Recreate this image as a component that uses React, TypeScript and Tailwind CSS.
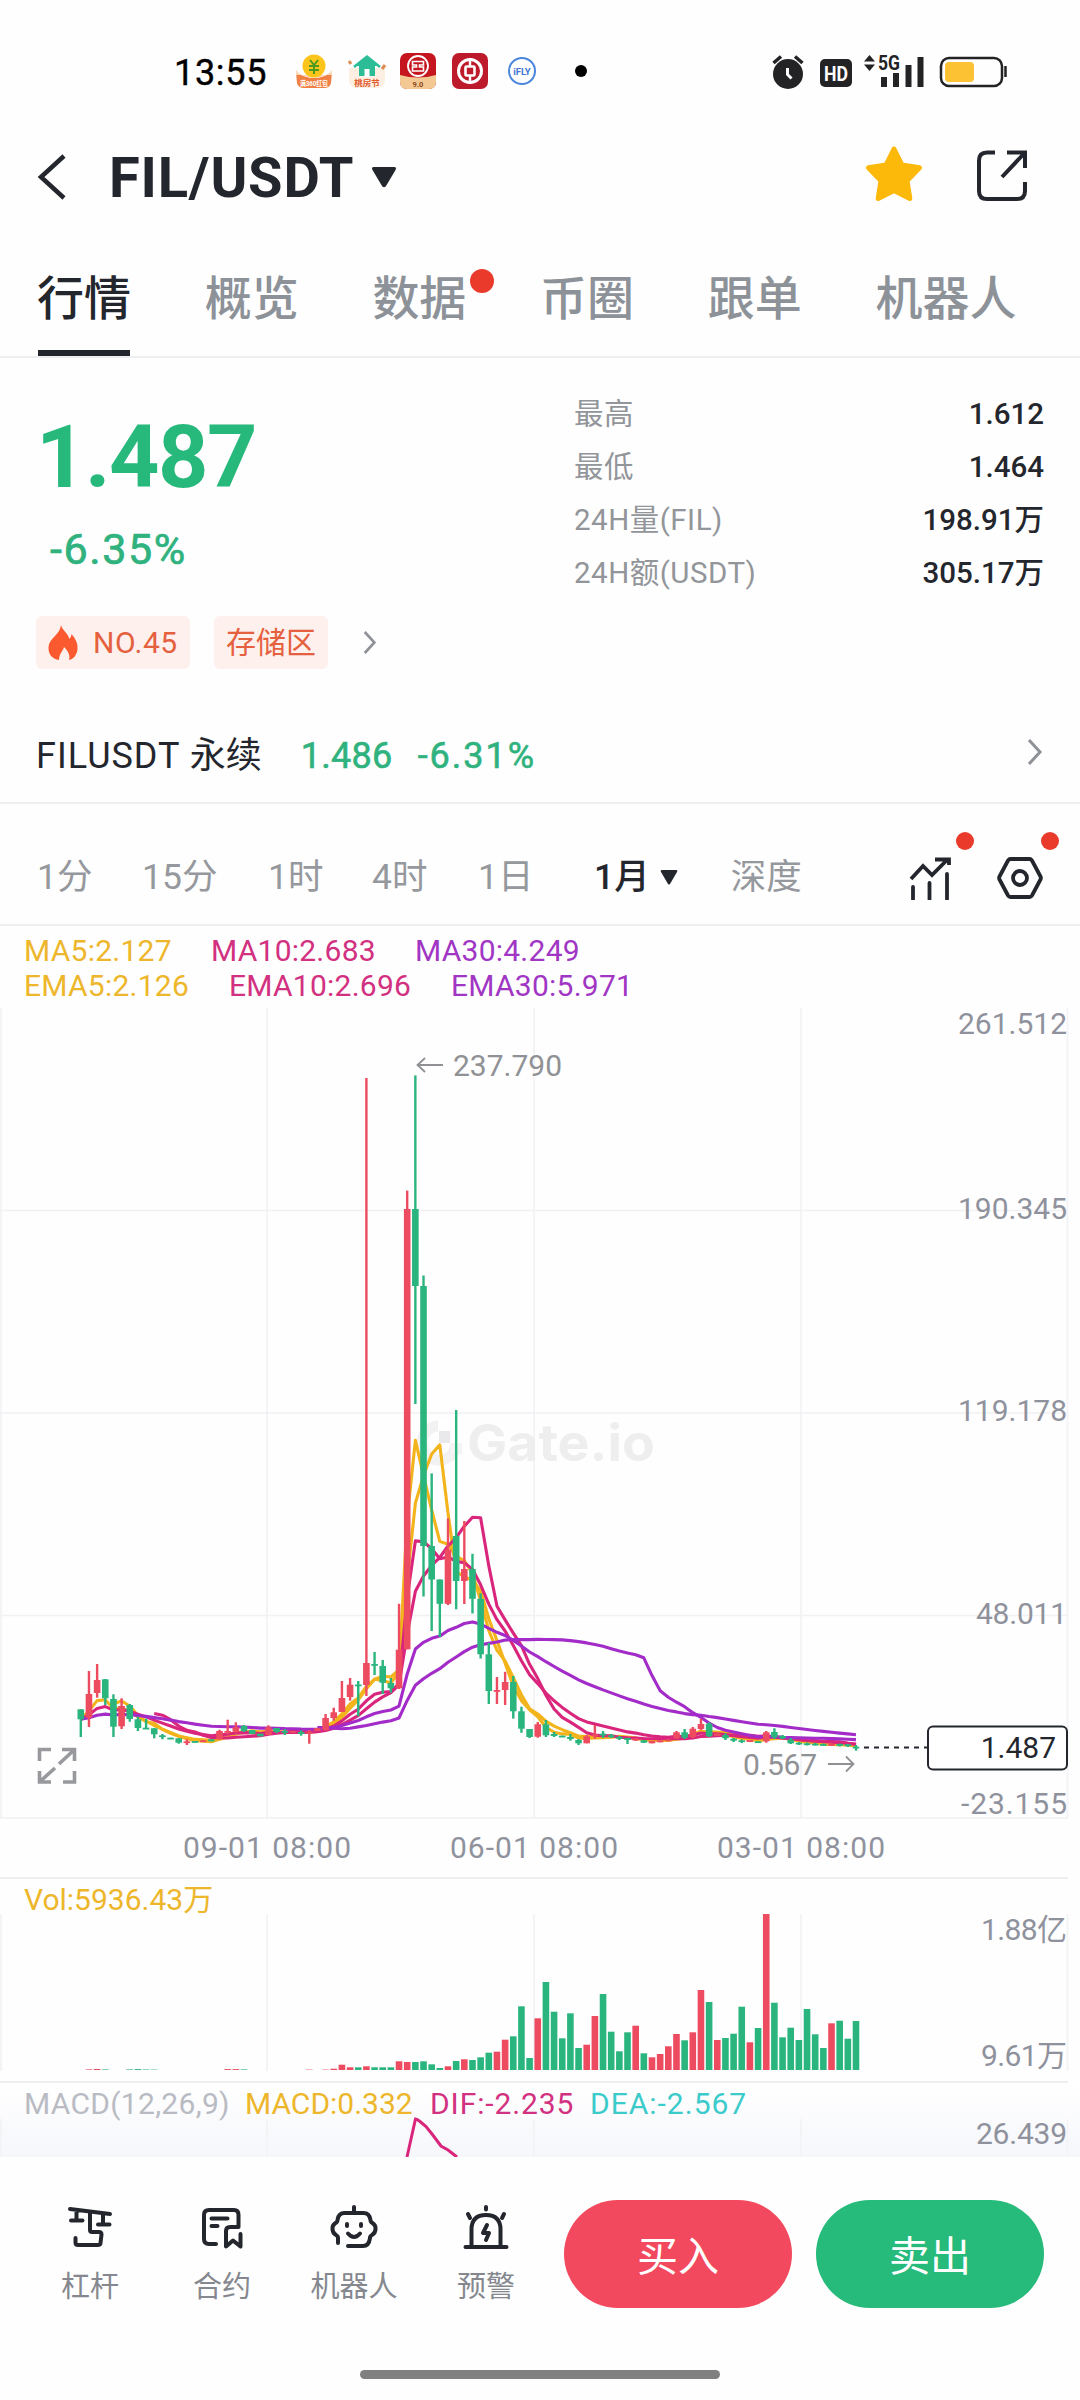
import React from "react";
import { clsx } from "clsx";

const UP = "#ed4b60";
const DOWN = "#2bb57e";

// [body top, body bottom, wick top, wick bottom, rising]
type Candle = [number, number, number, number, 0 | 1];

const CANDLES: Candle[] = [
  [1709.3, 1719.3, 1709.3, 1737, 0],
  [1694, 1717.7, 1671, 1727, 1],
  [1680, 1693, 1664, 1697.7, 1],
  [1679.3, 1698.3, 1679, 1705, 0],
  [1699, 1726.7, 1694.3, 1737, 0],
  [1706, 1726.3, 1698.3, 1729, 1],
  [1705, 1719, 1704, 1721.7, 0],
  [1719.3, 1728, 1716.7, 1731, 0],
  [1727.7, 1729, 1718.7, 1729, 0],
  [1728.3, 1734.3, 1728, 1738.3, 0],
  [1735.3, 1736.7, 1734, 1739.3, 0],
  [1737.7, 1739, 1737.7, 1739, 0],
  [1738.3, 1742.7, 1738.3, 1743.7, 0],
  [1741.3, 1742.3, 1739.3, 1745, 1],
  [1741, 1742.7, 1741, 1742.7, 0],
  [1740.3, 1741.7, 1740.3, 1741.7, 1],
  [1739.3, 1741.3, 1739.3, 1741.3, 0],
  [1731, 1739.3, 1729.7, 1739.3, 1],
  [1731, 1732.7, 1719.7, 1734, 1],
  [1727.3, 1731.7, 1722.3, 1732.7, 1],
  [1726, 1731, 1725, 1732, 0],
  [1730, 1734, 1730, 1734, 0],
  [1733.7, 1736.3, 1733.7, 1736.3, 0],
  [1727.3, 1735, 1725.3, 1735, 1],
  [1728, 1732, 1728, 1733, 0],
  [1731, 1732.7, 1729, 1735, 0],
  [1731, 1732.3, 1731, 1732.3, 1],
  [1732, 1734, 1730.3, 1735.7, 0],
  [1731.7, 1733, 1730, 1743.7, 1],
  [1728, 1731, 1728, 1731, 1],
  [1718, 1730.3, 1714, 1730.3, 1],
  [1712.3, 1718, 1707.7, 1720.7, 1],
  [1698, 1712, 1681, 1712, 1],
  [1684.7, 1697, 1678, 1700.7, 1],
  [1684.5, 1686, 1681, 1716.3, 0],
  [1663, 1685, 1078, 1696, 1],
  [1664, 1665, 1652, 1675, 0],
  [1666, 1682.7, 1660, 1694, 0],
  [1683, 1688.3, 1678, 1692.7, 0],
  [1649.7, 1688.3, 1603.8, 1689, 1],
  [1209, 1649.3, 1190.6, 1649.3, 1],
  [1209, 1286, 1075.4, 1404, 0],
  [1286, 1546, 1275.5, 1596.5, 0],
  [1546, 1579.5, 1473.4, 1631, 0],
  [1579.5, 1603.8, 1579.5, 1637, 0],
  [1549.6, 1603.8, 1518.4, 1605, 1],
  [1536, 1581, 1410, 1609.3, 0],
  [1569, 1581, 1521, 1604, 1],
  [1569, 1598.8, 1553.8, 1613.5, 0],
  [1598.8, 1654.3, 1593.3, 1658.5, 0],
  [1654.3, 1691, 1643, 1704, 0],
  [1690, 1691, 1677, 1704, 1],
  [1682, 1690, 1671.8, 1705, 1],
  [1682, 1711.3, 1676, 1718.6, 0],
  [1711.3, 1728.7, 1706.7, 1732.8, 0],
  [1729, 1737, 1729, 1738, 0],
  [1724.3, 1736.7, 1722, 1737.7, 1],
  [1724.3, 1735.3, 1720, 1737, 0],
  [1734, 1736, 1732, 1737, 0],
  [1735.7, 1737, 1735.7, 1737, 0],
  [1737, 1739, 1734, 1740.7, 0],
  [1740, 1743.3, 1739, 1745, 0],
  [1736.3, 1743.3, 1735, 1743.3, 1],
  [1734.3, 1736.3, 1725, 1738.7, 1],
  [1733.7, 1735.3, 1731, 1738, 0],
  [1735.3, 1737, 1734, 1738, 0],
  [1737, 1738.7, 1736, 1740, 0],
  [1738, 1740, 1738, 1744, 0],
  [1738.7, 1740.3, 1738, 1741, 1],
  [1740.3, 1742.7, 1740, 1743, 0],
  [1741, 1743.3, 1741, 1743.3, 1],
  [1740.3, 1742.3, 1740.3, 1742.3, 1],
  [1739.3, 1741.3, 1739.3, 1741.3, 1],
  [1732.3, 1738.3, 1731, 1739, 1],
  [1732.3, 1737.7, 1729, 1739, 0],
  [1728.7, 1737, 1727, 1738, 1],
  [1724, 1729, 1718.7, 1730, 1],
  [1723.7, 1736.3, 1722.3, 1737, 0],
  [1733.7, 1736, 1733, 1736, 1],
  [1735, 1738.3, 1733.3, 1740, 0],
  [1738.7, 1740.7, 1738, 1742, 0],
  [1740.3, 1742, 1739.5, 1743, 0],
  [1740, 1742, 1740, 1742, 1],
  [1741.3, 1742.3, 1741.3, 1742.3, 0],
  [1732.3, 1741.3, 1731, 1742.7, 1],
  [1732, 1737.3, 1728.3, 1739, 0],
  [1736, 1738.3, 1735, 1739, 0],
  [1739.7, 1743.3, 1738, 1744, 0],
  [1742.7, 1744, 1742, 1745, 0],
  [1743.3, 1744.3, 1742.5, 1745.5, 0],
  [1743.7, 1744.7, 1743, 1745.5, 0],
  [1744, 1745, 1743.5, 1746, 0],
  [1744, 1745.3, 1743.5, 1746, 1],
  [1744, 1745.3, 1743.5, 1746.5, 0],
  [1744.3, 1745.7, 1744, 1747, 0],
  [1746.7, 1748, 1745, 1750.7, 0],
];

// bar heights in px, one for each candle
const VOLUMES = [
  0, 0.6, 1, 0.6, 0, 0, 0.6, 0.9, 0.5, 0.4, 0, 0, 0, 0, 0, 0, 0, 0, 0.9, 0.9, 0.6, 0, 0, 0,
  0, 0, 0, 0, 0.4, 0, 0.4, 1.3, 5.3, 2.7, 2.7, 3.7, 2.7, 2.7, 2.7, 8.7, 8, 8, 8.7, 5.7,
  2, 3.7, 9, 10.7, 10, 12.7, 17.3, 18.3, 30.3, 33.7, 63.7, 12, 51.7, 88, 58.3, 31.7, 56.7,
  22, 25.3, 54, 76, 38.3, 18.7, 37.7, 44.3, 16.7, 12.7, 16, 23.7, 36, 29.7, 37.7, 80, 68,
  30, 32, 36.3, 63.3, 27.7, 42, 156, 67.3, 32.7, 42.3, 30, 61, 35.7, 22, 46.7, 49.3, 31.3, 49,
];

const xAt = (i: number) => 80.8 + i * 8.16;
const CLOSES = CANDLES.map(([top, bottom, , , up]) => (up ? top : bottom));

const sma = (n: number) =>
  CLOSES.map((_, i) =>
    i < n - 1 ? null : CLOSES.slice(i - n + 1, i + 1).reduce((a, b) => a + b, 0) / n
  );

const ema = (n: number) => {
  let prev = CLOSES[0];
  return CLOSES.map((c) => (prev += ((c - prev) * 2) / (n + 1)));
};

const toPoints = (values: (number | null)[]) =>
  values
    .map((v, i) => (v === null ? null : `${xAt(i).toFixed(1)},${v.toFixed(1)}`))
    .filter(Boolean)
    .join(" ");

const LINES = [
  { color: "#f3b41b", values: sma(5) },
  { color: "#f3b41b", values: ema(5) },
  { color: "#d9267c", values: sma(10) },
  { color: "#d9267c", values: ema(10) },
  { color: "#a32cc9", values: sma(30) },
  { color: "#a32cc9", values: ema(30) },
];

const TABS = ["行情", "概览", "数据", "币圈", "跟单", "机器人"];

const STATS = [
  ["最高", "1.612"],
  ["最低", "1.464"],
  ["24H量(FIL)", "198.91万"],
  ["24H额(USDT)", "305.17万"],
];

const Chevron = ({ className }: { className?: string }) => (
  <svg viewBox="0 0 16 28" className={className} fill="none" stroke="#8e9196" strokeWidth="3">
    <path d="M2 2l11 12L2 26" />
  </svg>
);

const StatusBar = () => (
  <div className="flex h-[146px] items-center pl-[174px] pr-[70px]">
    <span className="w-[122px] text-[36px] leading-none tracking-[0.700px] text-black [-webkit-text-stroke:0.400px_#000]">
      13:55
    </span>
    <svg width="300" height="40" viewBox="0 0 300 40" className="-mt-0.5">
      {/* coin */}
      <path d="M0 20q18 12 36 0l-1 11q-1 5-7 5H8q-6 0-7-5z" fill="#f08043" />
      <path d="M0 18q5 6 12 7h12q7-1 12-7v5H0z" fill="#fbd9bb" />
      <circle cx="18" cy="14" r="11.5" fill="#fdc51b" />
      <path d="M14 8l4 5 4-5M13 14h10M13 18h10M18 13v9" stroke="#4b9a1f" strokeWidth="2" fill="none" />
      <text x="18" y="34" textAnchor="middle" fontSize="7" fontWeight="700" fill="#fff" textLength="28" lengthAdjust="spacingAndGlyphs">满360红包</text>
      {/* house */}
      <path d="M53 16v13q1 7 8 7h20q7 0 8-7V16z" fill="#fdf0e2" />
      <path d="M71 5l11 9h-3v10H63V14h-3z" fill="#2cbd97" />
      <path d="M58 15L71 4.500l13 10.500" stroke="#2cbd97" strokeWidth="2.500" fill="none" />
      <rect x="68.500" y="17" width="5" height="8" fill="#fff" />
      <path d="M53 9l2 3M86 17l3-4" stroke="#e08c53" strokeWidth="3" />
      <text x="71" y="34" textAnchor="middle" fontSize="8.500" fontWeight="700" fill="#e2592c">桃房节</text>
      {/* icbc */}
      <rect x="104" y="1" width="36" height="36" rx="7" fill="#c5161f" />
      <path d="M104 23q18 5 36 0v7q0 7-7 7h-22q-7 0-7-7z" fill="#f3c893" />
      <circle cx="122" cy="14" r="10" fill="#c5161f" stroke="#fff" strokeWidth="1.800" />
      <path d="M116.500 9.500h11v3.500h-4v2h4v4h-11v-4h4v-2h-4z" fill="none" stroke="#fff" strokeWidth="1.600" />
      <text x="122" y="35" textAnchor="middle" fontSize="7.500" fontWeight="700" fill="#8d4a23">9.0</text>
      {/* bank of china */}
      <rect x="156" y="1" width="36" height="36" rx="7" fill="#bd1a2b" />
      <circle cx="174" cy="19" r="11.500" fill="none" stroke="#fff" strokeWidth="3" />
      <rect x="169.500" y="14.500" width="9" height="9" rx="1" fill="none" stroke="#fff" strokeWidth="2.600" />
      <path d="M174 6v8M174 24v8" stroke="#fff" strokeWidth="2.400" />
      {/* ifly */}
      <circle cx="226" cy="19" r="13" fill="none" stroke="#4a86dc" strokeWidth="2" />
      <text x="226" y="22.500" textAnchor="middle" fontSize="9.500" fontWeight="700" fill="#3f78d0">iFLY</text>
      <circle cx="285" cy="19" r="6" fill="#000" />
    </svg>

    <svg width="240" height="40" viewBox="770 52 240 40" className="ml-auto -mt-0.5 text-[#232325]">
      <circle cx="788" cy="74" r="15" fill="currentColor" />
      <path d="M773.500 63l7.500-6.500M802.500 63l-7.500-6.500" stroke="currentColor" strokeWidth="3.500" />
      <path d="M787.500 68v6.500l4 4" stroke="#fff" strokeWidth="3" fill="none" />
      <rect x="820" y="59" width="32" height="28" rx="5" fill="currentColor" />
      <text x="836" y="80.500" textAnchor="middle" fontSize="21" fontWeight="700" fill="#fff" textLength="24" lengthAdjust="spacingAndGlyphs">HD</text>
      <path d="M864 61.500l5.500-6.500 5.500 6.500zM864 64.500h11l-5.500 6.500z" fill="currentColor" />
      <path d="M881 77h6v10h-6zM893 73h6v14h-6zM905.500 65h6v22h-6zM917.500 57h6v30h-6z" fill="currentColor" />
      <text x="878" y="70" fontSize="21" fontWeight="700" fill="currentColor" textLength="22" lengthAdjust="spacingAndGlyphs">5G</text>
      <rect x="941" y="58" width="61" height="28" rx="8" fill="none" stroke="currentColor" strokeWidth="2.500" />
      <rect x="945" y="62" width="29" height="20" rx="4" fill="#fdc233" />
      <path d="M1005.500 66v11" stroke="currentColor" strokeWidth="2.500" />
    </svg>
  </div>
);

const Header = () => (
  <header className="flex h-[62px] items-center pl-[37px] pr-[51px] text-[#24262d]">
    <svg width="30" height="46" viewBox="0 0 30 46" fill="none" stroke="currentColor" strokeWidth="4.500">
      <path d="M27 2L4 23l23 21" />
    </svg>
    <h1 className="ml-[42px] mt-0.5 text-[56px] font-bold leading-none tracking-[0.800px]">FIL/USDT</h1>
    <svg width="26" height="22" viewBox="0 0 26 22" className="ml-[17px]">
      <path d="M3 1h20q3 0 1.500 3L15 20q-2 2.500-4 0L1.500 4Q0 1 3 1z" fill="currentColor" />
    </svg>
    <svg width="60" height="58" viewBox="0 0 60 58" className="-mt-1 ml-auto">
      <path
        d="M30 3l8 16 17.500 2.700-12.500 13 2.800 17.800L30 44.500 14.200 52.500 17 34.700l-12.500-13L22 19z"
        fill="#fdb909"
        stroke="#fdb909"
        strokeWidth="5"
        strokeLinejoin="round"
      />
    </svg>
    <svg width="54" height="54" viewBox="0 0 54 54" fill="none" stroke="currentColor" strokeWidth="4" className="-mt-0.5 ml-[51px]">
      <path d="M20 3.500h-8q-8 0-8 8V42q0 8 8 8h30q8 0 8-8V33" />
      <path d="M32 3.500h18V19M50 3.500L27 28" />
    </svg>
  </header>
);

const Tabs = () => (
  <nav className="flex h-[150px] items-end gap-[73.700px] border-b-2 border-[#eeeff1] pl-[37px]">
    {TABS.map((tab, i) => (
      <div key={tab} className="relative flex flex-col items-center">
        <span
          className={clsx(
            "text-[47px] font-medium leading-[70px]",
            i === 0 ? "text-[#24262d]" : "text-[#8d9299]"
          )}
        >
          {tab}
        </span>
        <span className={clsx("mt-4 h-1.5 w-[92px]", i === 0 && "bg-[#24262d]")} />
        {tab === "数据" && (
          <span className="absolute -right-[28px] top-[5px] size-6 rounded-full bg-[#e93a2c]" />
        )}
      </div>
    ))}
  </nav>
);

const Summary = () => (
  <section className="flex h-[311px] justify-between pl-9 pr-9">
    <div className="flex flex-col pt-[49px]">
      <span className="text-[88px] font-bold leading-[100px] tracking-[-1.500px] text-[#27b87c]">
        1.487
      </span>
      <span className="mt-3 pl-3.5 text-[43px] leading-[60px] tracking-[1.600px] text-[#2fb27e] [-webkit-text-stroke:0.700px_#2fb27e]">
        -6.35%
      </span>
      <div className="mt-[37px] flex h-[53px] items-center text-[30px] text-[#e5603e]">
        <div className="flex h-full w-[154px] items-center rounded-md bg-[#fef0ec] pl-3">
          <svg width="30" height="36" viewBox="0 0 30 36" fill="#fb5a30">
            <path d="M13 0c1 5 7 8 8.500 14 1-1 1.800-3 2-5C28 14 30 19 29.500 24c-.5 6-4 10-8.500 11 1.500-5-1-9-5-13-1 4-5 7-5 13C5 34 0 30 .5 22 1 13 12 10 13 0z" />
          </svg>
          <span className="ml-[15px] leading-none tracking-[0.500px]">NO.45</span>
        </div>
        <div className="ml-6 flex h-full w-[114px] items-center justify-center rounded-md bg-[#fef0ec] leading-none">
          存储区
        </div>
        <Chevron className="ml-[35px] h-[25px] w-[14px]" />
      </div>
    </div>
    <dl className="w-[470px] pt-[30px]">
      {STATS.map(([label, value]) => (
        <div key={label} className="flex h-[53px] items-center justify-between text-[29.500px]">
          <dt className="tracking-[0.500px] text-[#929599]">{label}</dt>
          <dd className="font-medium text-[#24262d]">{value}</dd>
        </div>
      ))}
    </dl>
  </section>
);

const PerpRow = () => (
  <div className="flex h-[135px] items-center border-b-2 border-[#eeeff1] pl-9 pr-[37px] pt-[40px] text-[36px] leading-none">
    <span className="text-[#24262d]">
      <span className="tracking-[1px]">FILUSDT </span>永续
    </span>
    <span className="ml-[39px] tracking-[0.300px] text-[#2fb27e] [-webkit-text-stroke:0.600px_#2fb27e]">
      1.486
    </span>
    <span className="ml-[25px] tracking-[2px] text-[#2fb27e] [-webkit-text-stroke:0.600px_#2fb27e]">
      -6.31%
    </span>
    <Chevron className="-mt-2 ml-auto h-[28px] w-4" />
  </div>
);

const Timeframes = () => (
  <div className="flex h-[122px] items-center border-b-2 border-[#eeeff1] pl-[37px] pr-[37px] pt-[27px] text-[35.500px] leading-none text-[#95989d]">
    <span className="w-[105px]">1分</span>
    <span className="w-[126px]">15分</span>
    <span className="w-[104px]">1时</span>
    <span className="w-[106px]">4时</span>
    <span className="w-[116px]">1日</span>
    <span className="font-medium text-[#24262d]">1月</span>
    <svg width="18" height="15" viewBox="0 0 18 15" className="ml-2.5 mr-[53px]">
      <path d="M2 0h14q2 0 1 2l-7 12q-1 1-2 0L1 2Q0 0 2 0z" fill="#24262d" />
    </svg>
    <span>深度</span>
    <div className="relative ml-auto">
      <svg width="42" height="44" viewBox="0 0 42 44" fill="none" stroke="#24262d" strokeWidth="3.800">
        <path d="M2 23L14 10l9 9L38 4M26 3.500h14V9" />
        <path d="M4 31v12M20.500 27v16M38 18v25" strokeLinecap="round" />
      </svg>
      <span className="absolute -right-[23px] -top-6 size-[18px] rounded-full bg-[#e93a2c]" />
    </div>
    <div className="relative ml-[46px]">
      <svg width="46" height="44" viewBox="0 0 46 44" fill="none" stroke="#24262d" strokeWidth="3.800">
        <path d="M13.500 3h19q1.500 0 2.500 1.500l8.500 16q.8 1.500 0 3L35 39.500q-1 1.500-2.500 1.500h-19q-1.500 0-2.500-1.500l-8.500-16q-.8-1.500 0-3L11 4.500Q12 3 13.500 3z" />
        <circle cx="23" cy="22" r="7" />
      </svg>
      <span className="absolute -right-4 -top-6 size-[18px] rounded-full bg-[#e93a2c]" />
    </div>
  </div>
);

const AxisLabel = ({ y, width, children }: { y: number; width: number; children: string }) => (
  <text x="1067" y={y} textAnchor="end" textLength={width} fontSize="30" fill="#8f929d">
    {children}
  </text>
);

const GridColumns = ({ y1, y2 }: { y1: number; y2: number }) => (
  <g stroke="#f4f4f7" strokeWidth="2">
    {[1, 267, 534, 801, 1067.5].map((x) => (
      <line key={x} x1={x} x2={x} y1={y1} y2={y2} />
    ))}
  </g>
);

const PriceChart = () => (
  <svg width="1080" height="874" viewBox="0 1003 1080 874" className="block">
    <GridColumns y1={1008} y2={1818} />
    <g stroke="#f1f1f3" strokeWidth="1.500">
      {[1210.5, 1413, 1615.6, 1818].map((y) => (
        <line key={y} x1="0" x2="1068" y1={y} y2={y} />
      ))}
    </g>

    {/* watermark */}
    <circle cx="439" cy="1443" r="17" fill="none" stroke="#f2f2f3" strokeWidth="11" />
    <path d="M438 1420h26v23h-26z" fill="#fff" />
    <path d="M439 1431h11v12h-11z" fill="#e9e9eb" />
    <path d="M451 1443h11v11h-11z" fill="#f4f4f5" />
    <text x="467" y="1461" fontSize="51" fontWeight="700" fontFamily="Inter" fill="#eeeeef" textLength="188" lengthAdjust="spacingAndGlyphs">
      Gate.io
    </text>

    {LINES.map(({ color, values }, i) => (
      <polyline
        key={i}
        points={toPoints(values)}
        fill="none"
        stroke={color}
        strokeWidth="3.100"
        strokeLinejoin="round"
      />
    ))}
    {CANDLES.map(([top, bottom, high, low, up], i) => (
      <g key={i} fill={up ? UP : DOWN}>
        <rect x={xAt(i) - 1.2} y={high} width="2.400" height={low - high} />
        <rect x={xAt(i) - 3.3} y={top} width="6.600" height={Math.max(bottom - top, 1.8)} />
      </g>
    ))}

    <g fill="none" stroke="#8f9195" strokeWidth="1.800">
      <path d="M443 1065h-25M425 1058l-7.500 7 7.500 7" />
      <path d="M828 1764h25M846 1756.500l7.500 7.500-7.500 7.500" />
    </g>
    <text x="453" y="1075.500" fontSize="30" fill="#8f9195" textLength="109">237.790</text>
    <text x="743" y="1774.500" fontSize="30" fill="#8f9195" textLength="74">0.567</text>

    <AxisLabel y={1034} width={109}>261.512</AxisLabel>
    <AxisLabel y={1219} width={109}>190.345</AxisLabel>
    <AxisLabel y={1421} width={109}>119.178</AxisLabel>
    <AxisLabel y={1624} width={91}>48.011</AxisLabel>
    <AxisLabel y={1814} width={106}>-23.155</AxisLabel>

    <path d="M864 1747.500h63" stroke="#24262d" strokeWidth="2" strokeDasharray="5 5" />
    <rect x="928" y="1726.500" width="139" height="43" rx="5" fill="#fff" stroke="#24262d" strokeWidth="2" />
    <text x="1056" y="1758" textAnchor="end" fontSize="30" fill="#24262d">1.487</text>

    {/* full screen toggle */}
    <g fill="none" stroke="#97999d" strokeWidth="3.600">
      <path d="M51 1749.500H39.500V1761M62 1749.500h12.500V1761M74 1750L59 1764" />
      <path d="M63 1782h11.500v-11M51 1782H39.500v-11M40 1781.500L55 1768" />
    </g>

    <g fontSize="30" fill="#8f929d" textAnchor="middle">
      <text x="267" y="1857.500" textLength="168">09-01 08:00</text>
      <text x="534" y="1857.500" textLength="168">06-01 08:00</text>
      <text x="801" y="1857.500" textLength="168">03-01 08:00</text>
    </g>
  </svg>
);

const VolumeChart = () => (
  <svg width="1080" height="167" viewBox="0 1914 1080 167" className="block overflow-visible">
    <GridColumns y1={1914} y2={2071} />
    {VOLUMES.map((h, i) => (
      <rect key={i} x={xAt(i) - 3.3} y={2070 - h} width="6.600" height={h} fill={CANDLES[i][4] ? UP : DOWN} />
    ))}
    <AxisLabel y={1940} width={86}>1.88亿</AxisLabel>
    <AxisLabel y={2066} width={86}>9.61万</AxisLabel>
  </svg>
);

const MacdChart = () => (
  <svg width="1080" height="38" viewBox="0 2119 1080 38" className="block overflow-visible">
    <GridColumns y1={2119} y2={2157} />
    <path
      d="M407 2157l8.500-38q1.500 0 4.500 2.500l6 5 6 7.500 9 12 7 4 9 7"
      fill="none"
      stroke="#d9267c"
      strokeWidth="3"
    />
    <AxisLabel y={2144} width={91}>26.439</AxisLabel>
  </svg>
);

const Charts = () => (
  <section className="text-[30px] leading-[35px]">
    <div className="h-[77px] pl-6 pt-[7px] tracking-[0.250px]">
      <div className="flex">
        <span className="w-[187px] text-[#edb62b]">MA5:2.127</span>
        <span className="w-[204px] text-[#d23080]">MA10:2.683</span>
        <span className="text-[#a136c4]">MA30:4.249</span>
      </div>
      <div className="flex">
        <span className="w-[205px] text-[#edb62b]">EMA5:2.126</span>
        <span className="w-[222px] text-[#d23080]">EMA10:2.696</span>
        <span className="text-[#a136c4]">EMA30:5.971</span>
      </div>
    </div>
    <PriceChart />
    <div className="mr-3 h-[37px] border-t-2 border-[#eeeff1] pl-6 pt-[3px] text-[#edb62b]">
      Vol:5936.43万
    </div>
    <VolumeChart />
    <div className="bg-linear-to-b from-white to-[#f6f7fb]">
      <div className="mr-3 flex h-[38px] border-t-2 border-[#eeeff1] pl-6 pt-[3px]">
        <span className="w-[221px] tracking-[0.300px] text-[#b9bbc3]">MACD(12,26,9)</span>
        <span className="w-[185px] text-[#edb62b]">MACD:0.332</span>
        <span className="w-[160px] tracking-[0.900px] text-[#d23080]">DIF:-2.235</span>
        <span className="tracking-[1px] text-[#3bcbcb]">DEA:-2.567</span>
      </div>
      <MacdChart />
    </div>
  </section>
);

const SHORTCUTS = [
  {
    label: "杠杆",
    icon: (
      <>
        <path d="M3 2l40 5M9.500 3v10M4 13.500h11.500M36 7v10M31 17.500h11.500" />
        <path d="M23 5v18q0 2 2 2h7q2.500 0 2.500 2.500l-1 8.500q0 2-3 2H11q-2.500 0-2.500-2.500V31" />
      </>
    ),
  },
  {
    label: "合约",
    icon: (
      <>
        <path d="M17 37h-7q-5 0-5-5V8q0-5 5-5h25q4.500 0 4.500 5v12H31q-4 0-4 4v15.500l7-6 7.500 6V27" />
        <path d="M12.500 11.500h16M12.500 19h6" />
      </>
    ),
  },
  {
    label: "机器人",
    icon: (
      <>
        <path d="M23 0v6M7 36v-5q0-2-2-3-3.500-2-3.500-6v-1q0-3 3-5 2-1 2-3 1-7 7-7h19q6 0 7 7 0 2 2 3 3 2 3 5v1q0 4-3.500 6-2 1-2 3-1 8-7 8H17" />
        <path d="M16 17v2M30 17v2M17 26.500q6 7 12 0" />
      </>
    ),
  },
  {
    label: "预警",
    icon: (
      <>
        <path d="M2.500 40h41M8.500 40V22.500Q8.500 8 23 8t14.500 14.500V40M23 0v2.500M5 7l2 4M41 7l-2 4" />
        <path d="M24 18l-4 8h6l-3 7" />
      </>
    ),
  },
];

const BottomBar = () => (
  <footer className="h-[243px] bg-[#fefefe] pt-[43px]">
    <div className="flex h-[108px] pl-6">
      {SHORTCUTS.map(({ label, icon }) => (
        <div key={label} className="flex w-[132px] flex-col items-center pt-[7px]">
          <svg
            width="46"
            height="44"
            viewBox="0 0 46 44"
            fill="none"
            stroke="#24262d"
            strokeWidth="4"
            strokeLinecap="round"
            strokeLinejoin="round"
            className="overflow-visible"
          >
            {icon}
          </svg>
          <span className="mt-[18px] text-[29px] leading-[36px] text-[#85888e]">{label}</span>
        </div>
      ))}
      <button className="ml-3 w-[228px] rounded-full bg-[#f3495e] pt-1.5 text-[41px] leading-none text-white">
        买入
      </button>
      <button className="ml-6 w-[228px] rounded-full bg-[#26ba7b] pt-1.5 text-[41px] leading-none text-white">
        卖出
      </button>
    </div>
    <div className="mx-auto mt-[62px] h-[9px] w-[360px] rounded-full bg-[#808080]" />
  </footer>
);

export default function App() {
  return (
    <main className="flex h-[2400px] w-[1080px] flex-col overflow-hidden bg-[#fefefe] font-['Roboto','Noto_Sans_CJK_SC',sans-serif]">
      <StatusBar />
      <Header />
      <Tabs />
      <Summary />
      <PerpRow />
      <Timeframes />
      <Charts />
      <BottomBar />
    </main>
  );
}
